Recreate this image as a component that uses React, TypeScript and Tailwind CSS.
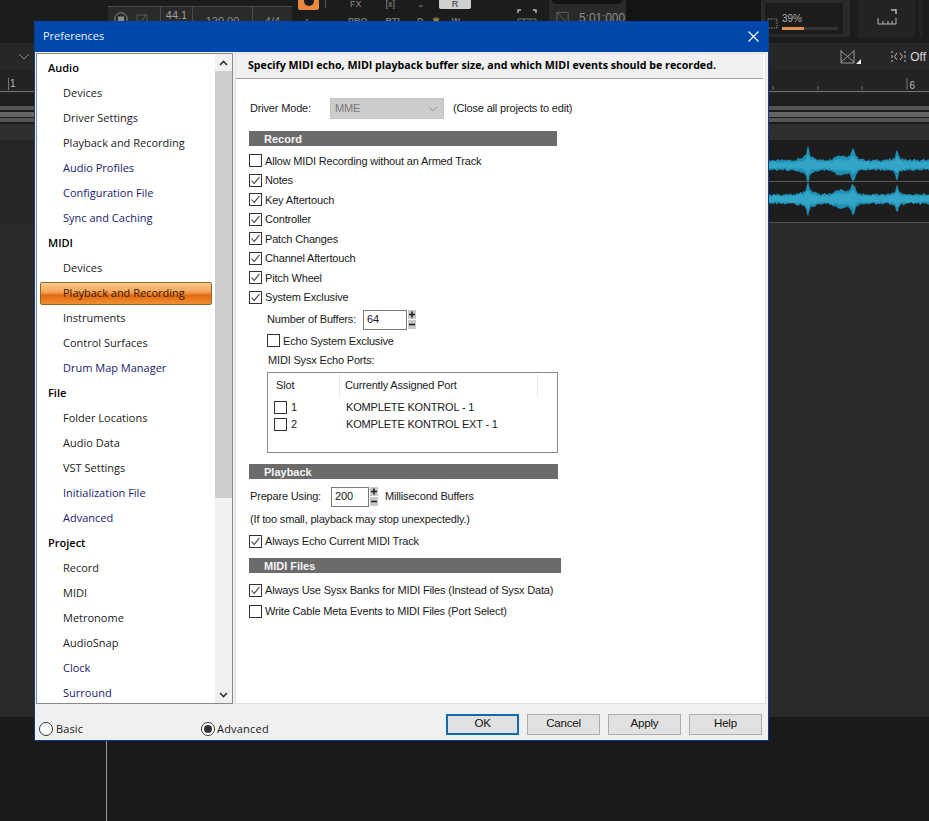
import React from "react";

const listFont = { fontFamily: '"Open Sans", "Noto Sans", sans-serif' };

type NavItem = { t: string; h?: boolean; blue?: boolean; sel?: boolean };
const nav: NavItem[] = [
  { t: "Audio", h: true },
  { t: "Devices" },
  { t: "Driver Settings" },
  { t: "Playback and Recording" },
  { t: "Audio Profiles", blue: true },
  { t: "Configuration File", blue: true },
  { t: "Sync and Caching", blue: true },
  { t: "MIDI", h: true },
  { t: "Devices" },
  { t: "Playback and Recording", sel: true },
  { t: "Instruments" },
  { t: "Control Surfaces" },
  { t: "Drum Map Manager", blue: true },
  { t: "File", h: true },
  { t: "Folder Locations" },
  { t: "Audio Data" },
  { t: "VST Settings" },
  { t: "Initialization File", blue: true },
  { t: "Advanced", blue: true },
  { t: "Project", h: true },
  { t: "Record" },
  { t: "MIDI" },
  { t: "Metronome" },
  { t: "AudioSnap" },
  { t: "Clock", blue: true },
  { t: "Surround", blue: true },
];

function Check({ on }: { on?: boolean }) {
  return (
    <span className="w-[13px] h-[13px] border border-[#333] bg-white shrink-0 flex items-center justify-center">
      {on && (
        <svg width="11" height="11" viewBox="0 0 11 11" fill="none">
          <path d="M1.5 5.5 L4.2 8.5 L9.5 2" stroke="#333" strokeWidth="1.1" />
        </svg>
      )}
    </span>
  );
}

function CheckRow({ label, on, className }: { label: string; on?: boolean; className?: string }) {
  return (
    <div className={"flex items-center gap-[3px] h-[19.5px] whitespace-nowrap " + (className ?? "")}>
      <Check on={on} />
      <span>{label}</span>
    </div>
  );
}

function Band({ label, w }: { label: string; w: string }) {
  return (
    <div className={"h-[15px] bg-[#6b6b6b] text-[#f4f4f4] font-bold pl-[15px] leading-[16px] text-[11px] tracking-normal " + w}>{label}</div>
  );
}

function Spin() {
  return (
    <svg width="8" height="19" viewBox="0 0 8 19" className="shrink-0">
      <rect x="0" y="0" width="8" height="9" fill="#c8c8c8" />
      <rect x="0" y="10" width="8" height="9" fill="#c8c8c8" />
      <path d="M1 4.5H7M4 1.5V7.5" stroke="#222" strokeWidth="1.6" />
      <path d="M1 14.5H7" stroke="#222" strokeWidth="1.6" />
    </svg>
  );
}

function Btn({ label, primary }: { label: string; primary?: boolean }) {
  return (
    <div
      className={
        "w-[73px] h-[21px] flex items-center justify-center bg-[#e1e1e1] border text-[#111] " +
        (primary ? "border-2 border-[#0f6cab]" : "border-[#adadad]")
      }
    >
      {label}
    </div>
  );
}

function envelope(x: number) {
  const g = (c: number, w: number, a: number) => a * Math.exp(-(((x - c) / w) ** 2));
  return 3.5 + g(39, 1.5, 10) + g(39, 9, 4) + g(71, 8, 5) + g(84, 2.5, 9) + g(84, 7, 3) + g(128, 1.5, 8) + g(128, 7, 2.5);
}

function noise(i: number) {
  const v = Math.sin(i * 12.9898) * 43758.5453;
  return v - Math.floor(v);
}

function wavePath(cy: number, scale: number, seed: number) {
  const top: string[] = [];
  const bot: string[] = [];
  for (let x = 0; x <= 160; x += 1) {
    const e = envelope(x) * scale;
    top.push(`${x},${(cy - e - noise(x + seed) * 2.6).toFixed(1)}`);
    bot.unshift(`${x},${(cy + e + noise(x + seed + 300) * 2.6).toFixed(1)}`);
  }
  return "M" + top.join("L") + "L" + bot.join("L") + "Z";
}

function Toolbar() {
  return (
    <div className="h-[43px] bg-[#1c1c1c] flex items-start overflow-hidden shrink-0 text-[#8c8c8c] text-[11px]">
      <div className="w-[108px] shrink-0" />
      <div className="w-[184px] h-[37px] mt-[6px] bg-[#2a2a2a] border-t border-[#4a4a4a] flex shrink-0">
        <div className="w-[52px] flex items-start gap-[8px] pl-[6px] pt-[5px]">
          <svg width="14" height="14" viewBox="0 0 14 14" fill="none" stroke="#8c8c8c">
            <circle cx="7" cy="7" r="6.2" />
            <rect x="4.5" y="5" width="5" height="5" fill="#8c8c8c" />
          </svg>
          <svg width="12" height="14" viewBox="0 0 12 14" fill="none" stroke="#5a5a5a">
            <path d="M1 3H11V13H1ZM3 8L5.5 10.5L10 2" />
          </svg>
        </div>
        <div className="w-[32px] border-l border-[#4a4a4a] text-center text-[#a0a0a0]">44.1</div>
        <div className="w-[60px] border-l border-[#4a4a4a] text-center pt-[6px]">120.00</div>
        <div className="w-[40px] border-l border-[#4a4a4a] text-center pt-[6px]">4/4</div>
      </div>
      <div className="w-[33px] shrink-0 flex flex-col items-center">
        <div className="w-[21px] h-[10px] bg-[#e8883a] rounded-b-[2px] flex justify-center">
          <span className="w-[10px] h-[6px] rounded-b-full bg-[#1c1c1c]" />
        </div>
        <span className="mt-[5px] italic">fx</span>
      </div>
      <div className="w-px h-[8px] bg-[#555] shrink-0" />
      <div className="w-[179px] shrink-0 flex flex-col">
        <div className="h-[9px] flex items-start">
          <span className="ml-[24px] leading-[9px] text-[9px]">FX</span>
          <span className="ml-[24px] leading-[9px] text-[9px]">[x]</span>
          <span className="ml-[22px] leading-[9px] text-[9px]">⌄</span>
          <div className="ml-[14px] w-[32px] h-[9px] bg-[#cfcfcf] rounded-b-[2px] text-[#333] text-[9px] text-center leading-[9px]">R</div>
        </div>
        <div className="flex text-[9px] mt-[6px] font-bold text-[#777]">
          <span className="ml-[22px]">PRO</span>
          <span className="ml-[18px]">RTL</span>
          <span className="ml-[14px]">D</span>
          <span className="ml-[8px] text-[#a08a3a]">♛</span>
          <span className="ml-[12px]">W</span>
        </div>
      </div>
      <div className="w-[44px] shrink-0 flex justify-center pt-[9px]">
        <svg width="20" height="13" viewBox="0 0 20 13" fill="none" stroke="#bbb">
          <path d="M1 4V1H4M16 1H19V4" strokeWidth="1.4" />
          <path d="M1 13V10H19V13M7 10V12M13 10V12" stroke="#777" />
        </svg>
      </div>
      <div className="w-[76px] h-[38px] bg-[#2a2a2a] shrink-0 flex flex-col">
        <div className="h-[4px] bg-[#141414] mx-[3px] rounded-b" />
        <div className="flex items-center pt-[5px] pl-[7px] gap-[10px]">
          <svg width="14" height="14" viewBox="0 0 14 14" fill="none" stroke="#666">
            <path d="M1 1H13V13ZM1 1V13H13" />
          </svg>
          <span className="text-[#8c8c8c] text-[12px] tracking-[-0.1px]">5:01:000</span>
        </div>
      </div>
      <div className="w-[137px] h-[38px] bg-[#141414] shrink-0 border-x border-[#2c2c2c]" />
      <div className="w-[88px] h-[37px] shrink-0 bg-[#2a2a2a] p-[3px] pr-[7px]">
        <div className="h-full bg-[#1c1c1c] flex items-end gap-[3px] pb-[4px] pl-[1px] rounded-b-sm">
          <svg width="13" height="13" viewBox="0 0 13 13" fill="none" stroke="#888" strokeDasharray="1.5 1">
            <rect x="2" y="2" width="9" height="9" />
          </svg>
          <div className="flex-1 mr-[5px] flex flex-col text-[10px] leading-[12px] text-[#aaa]">
            <span>39%</span>
            <div className="h-[3px] bg-[#333] mt-[2px]">
              <div className="h-full w-[39%] bg-[#e0904a]" />
            </div>
          </div>
        </div>
      </div>
      <div className="w-[57px] h-[38px] ml-[8px] shrink-0 bg-[#232323] rounded-b flex items-start justify-center pt-[9px]">
        <svg width="20" height="16" viewBox="0 0 20 16" fill="none" stroke="#bbb">
          <path d="M1 9V15H19V9M6 12V15M11 12V15M15 12V15" />
          <path d="M14 1H19V5" strokeWidth="1.5" />
        </svg>
      </div>
      <div className="w-[4px] ml-[4px] h-[38px] shrink-0 bg-[#232323]" />
    </div>
  );
}

function Background() {
  return (
    <div className="h-[821px] bg-[#1a1a1a] flex flex-col text-[#8a8a8a] text-[11px]" style={{ fontFamily: '"Liberation Sans", sans-serif' }}>
      <Toolbar />
      <div className="h-[27px] bg-[#272727] flex items-center shrink-0 text-[#d8d8d8] text-[12px]">
        <svg width="12" height="7" viewBox="0 0 12 7" fill="none" stroke="#888" className="ml-[18px]">
          <path d="M1 1L6 6L11 1" />
        </svg>
        <div className="flex-1" />
        <svg width="21" height="15" viewBox="0 0 21 15" fill="none" stroke="#999">
          <path d="M1 2L14 13M14 2L1 13M1 1V14H14V1" />
          <path d="M16 15L21 10V15Z" fill="#eee" stroke="none" />
        </svg>
        <svg width="15" height="13" viewBox="0 0 15 13" fill="none" stroke="#bbb" className="ml-[30px] mr-[4px]">
          <path d="M1 1V3M1 5V8M1 10V12M14 1V3M14 5V8M14 10V12" />
          <path d="M6 3L3.5 6.5L6 10M9 3L11.5 6.5L9 10" />
        </svg>
        <span className="mr-[3px]">Off</span>
      </div>
      <div className="h-[25px] bg-[#232323] shrink-0 flex justify-between">
        <div className="h-[22px] flex items-end pl-[8px] pb-[1px] text-[10px] text-[#bbb] border-b border-[#777] w-full">
          <span className="border-l border-[#777] pl-[1px] leading-[12px]">1</span>
          <div className="flex-1" />
          <svg width="160" height="12" viewBox="0 0 160 12" stroke="#777" fill="none" className="shrink-0">
            <path d="M4 8V12M49 8V12M93 8V12M138 0V12" />
          </svg>
          <span className="absolute right-[14px] top-[80px] leading-[12px]">6</span>
        </div>
      </div>
      <div className="h-[11px] bg-[#1e1e1e] shrink-0" />
      <div className="h-[4px] bg-[#555] shrink-0" />
      <div className="h-[2px] bg-[#1c1c1c] shrink-0" />
      <div className="h-[5px] bg-[#666] shrink-0" />
      <div className="h-px bg-[#1c1c1c] shrink-0" />
      <div className="h-[4px] bg-[#555] shrink-0" />
      <div className="h-[2px] bg-[#1c1c1c] shrink-0" />
      <div className="h-[16px] bg-[#2f2f2f] shrink-0" />
      <div className="h-[83px] bg-[#262626] shrink-0 flex justify-end">
        <svg width="160" height="83" viewBox="0 0 160 83" className="shrink-0 bg-[#1d1d1d]">
          <path d={wavePath(25, 1, 1)} fill="#1f8fb3" />
          <path d={wavePath(25, 0.5, 50)} fill="#33a6c8" />
          <path d={wavePath(59, 0.9, 100)} fill="#1f8fb3" />
          <path d={wavePath(59, 0.5, 150)} fill="#33a6c8" />
          <path d="M0 41.5H160" stroke="#555" />
          <path d="M0 82.5H160" stroke="#555" />
        </svg>
      </div>
      <div className="h-[494px] bg-[#2a2a2a] shrink-0" />
      <div className="flex-1 bg-[#1a1a1a] pl-[106px]">
        <div className="w-px h-full bg-[#9a9a9a]" />
      </div>
    </div>
  );
}

export default function App() {
  return (
    <div className="relative w-[929px] h-[821px] overflow-hidden">
      <Background />
      <div
        className="absolute left-[34px] top-[21px] w-[735px] h-[720px] bg-[#f0f0f0] border border-t-0 border-[#0b3f8c] flex flex-col text-[#1a1a1a] text-[11px]"
        style={{ fontFamily: '"Liberation Sans", Arial, sans-serif' }}
      >
        <div className="h-[31px] bg-[#0047ab] text-[#eef2fa] flex items-center justify-between pl-[8px] pr-[9px] text-[11px] shrink-0" style={listFont}>
          <span>Preferences</span>
          <svg width="11" height="11" viewBox="0 0 11 11" stroke="white" strokeWidth="1.1">
            <path d="M0.5 0.5L10.5 10.5M10.5 0.5L0.5 10.5" />
          </svg>
        </div>
        <div className="h-[652px] flex gap-[2px] pl-px pr-[2px] pt-px shrink-0">
          <div className="w-[197px] border border-[#8a8a8a] bg-white flex shrink-0" style={listFont}>
            <div className="w-[178px] overflow-hidden pt-[2px] text-[11px]">
              {nav.map((n, i) =>
                n.sel ? (
                  <div
                    key={i}
                    className="h-[23px] my-px mx-[3px] pl-[22px] flex items-center border border-[#8a6a2a] rounded-[2px] text-[#3a1a00] bg-[linear-gradient(#f8c888_0%,#f4a860_40%,#e26a10_60%,#f09030_100%)]"
                  >
                    {n.t}
                  </div>
                ) : (
                  <div
                    key={i}
                    className={
                      "h-[25px] flex items-center " +
                      (n.h ? "pl-[11px] font-semibold text-black" : "pl-[26px] ") +
                      (n.blue ? "text-[#1a1a6e]" : n.h ? "" : "text-[#222]")
                    }
                  >
                    {n.t}
                  </div>
                ),
              )}
            </div>
            <div className="w-[17px] flex flex-col bg-[#f0f0f0] shrink-0">
              <div className="h-[17px] flex items-center justify-center">
                <svg width="9" height="6" viewBox="0 0 9 6" fill="none" stroke="#333" strokeWidth="1.6"><path d="M1 5L4.5 1.5L8 5" /></svg>
              </div>
              <div className="h-[427px] bg-[#cdcdcd]" />
              <div className="flex-1" />
              <div className="h-[17px] flex items-center justify-center">
                <svg width="9" height="6" viewBox="0 0 9 6" fill="none" stroke="#333" strokeWidth="1.6"><path d="M1 1L4.5 4.5L8 1" /></svg>
              </div>
            </div>
          </div>
          <div className="flex-1 bg-white border border-[#e0e0e0] flex flex-col">
            <div className="h-[25px] bg-[#f0f0f0] border-b border-[#a0a0a0] flex items-center pl-[12px] mr-[2px] font-bold text-[10.65px] text-black shrink-0 whitespace-nowrap" style={listFont}>
              Specify MIDI echo, MIDI playback buffer size, and which MIDI events should be recorded.
            </div>
            <div className="pl-[13px] pt-[19px] flex flex-col tracking-[-0.17px]">
              <div className="flex items-center h-[21px] pl-[1px] whitespace-nowrap">
                <span className="w-[80px]">Driver Mode:</span>
                <div className="w-[114px] h-[21px] bg-[#cccccc] border border-[#c4c4c4] text-[#7a7a7a] flex items-center justify-between pl-[4px] pr-[5px]">
                  MME
                  <svg width="10" height="6" viewBox="0 0 10 6" fill="none" stroke="#999"><path d="M1 1L5 5L9 1" /></svg>
                </div>
                <span className="ml-[9px]">(Close all projects to edit)</span>
              </div>
              <div className="mt-[12px] mb-[5px]"><Band label="Record" w="w-[308px]" /></div>
              <CheckRow label="Allow MIDI Recording without an Armed Track" />
              <CheckRow label="Notes" on />
              <CheckRow label="Key Aftertouch" on />
              <CheckRow label="Controller" on />
              <CheckRow label="Patch Changes" on />
              <CheckRow label="Channel Aftertouch" on />
              <CheckRow label="Pitch Wheel" on />
              <CheckRow label="System Exclusive" on />
              <div className="flex items-center h-[21px] pl-[18px] mt-[2px] whitespace-nowrap">
                <span className="w-[96px]">Number of Buffers:</span>
                <div className="w-[44px] h-[20px] border border-[#7a7a7a] flex items-center pl-[3px] mr-[1px]">64</div>
                <Spin />
              </div>
              <CheckRow label="Echo System Exclusive" className="pl-[18px] mt-[1px]" />
              <div className="pl-[19px] h-[20px] flex items-center">MIDI Sysx Echo Ports:</div>
              <div className="ml-[18px] mt-px w-[291px] h-[81px] border border-[#8a8a8a] flex flex-col">
                <div className="h-[26px] flex items-center">
                  <span className="w-[72px] pl-[8px] h-[23px] flex items-center border-r border-[#e8e8e8]">Slot</span>
                  <span className="w-[198px] pl-[5px] h-[23px] flex items-center border-r border-[#e8e8e8]">Currently Assigned Port</span>
                </div>
                <div className="h-[17px] flex items-center pl-[6px]">
                  <Check />
                  <span className="w-[59px] pl-[4px]">1</span>
                  <span>KOMPLETE KONTROL - 1</span>
                </div>
                <div className="h-[17px] flex items-center pl-[6px]">
                  <Check />
                  <span className="w-[59px] pl-[4px]">2</span>
                  <span>KOMPLETE KONTROL EXT - 1</span>
                </div>
              </div>
              <div className="mt-[11px]"><Band label="Playback" w="w-[309px]" /></div>
              <div className="flex items-center h-[22px] mt-[7px] pl-px whitespace-nowrap">
                <span className="w-[81px]">Prepare Using:</span>
                <div className="w-[38px] h-[20px] border border-[#7a7a7a] flex items-center pl-[3px] mr-[1px]">200</div>
                <Spin />
                <span className="ml-[7px]">Millisecond Buffers</span>
              </div>
              <div className="h-[20px] flex items-center mt-[2px] pl-px">(If too small, playback may stop unexpectedly.)</div>
              <CheckRow label="Always Echo Current MIDI Track" on className="mt-[2px]" />
              <div className="mt-[7px] mb-[7px]"><Band label="MIDI Files" w="w-[312px]" /></div>
              <CheckRow label="Always Use Sysx Banks for MIDI Files (Instead of Sysx Data)" on className="h-[21px]" />
              <CheckRow label="Write Cable Meta Events to MIDI Files (Port Select)" className="h-[21px]" />
            </div>
          </div>
        </div>
        <div className="flex-1 flex items-center pl-[4px] pr-[6px] text-[11px]" style={listFont}>
          <div className="w-[162px] flex items-center gap-[3px] pt-[14px] tracking-[0.1px]">
            <span className="w-[14px] h-[14px] rounded-full border border-[#333] bg-white" />
            Basic
          </div>
          <div className="flex items-center gap-[2px] pt-[14px] tracking-[0.2px]">
            <span className="w-[14px] h-[14px] rounded-full border border-[#333] bg-white flex items-center justify-center">
              <span className="w-[8px] h-[8px] rounded-full bg-[#333]" />
            </span>
            Advanced
          </div>
          <div className="flex-1" />
          <div className="flex gap-[8px] text-[11.5px] pt-[4px] tracking-[-0.2px]" style={{ fontFamily: '"Liberation Sans", sans-serif' }}>
            <Btn label="OK" primary />
            <Btn label="Cancel" />
            <Btn label="Apply" />
            <Btn label="Help" />
          </div>
        </div>
      </div>
    </div>
  );
}
